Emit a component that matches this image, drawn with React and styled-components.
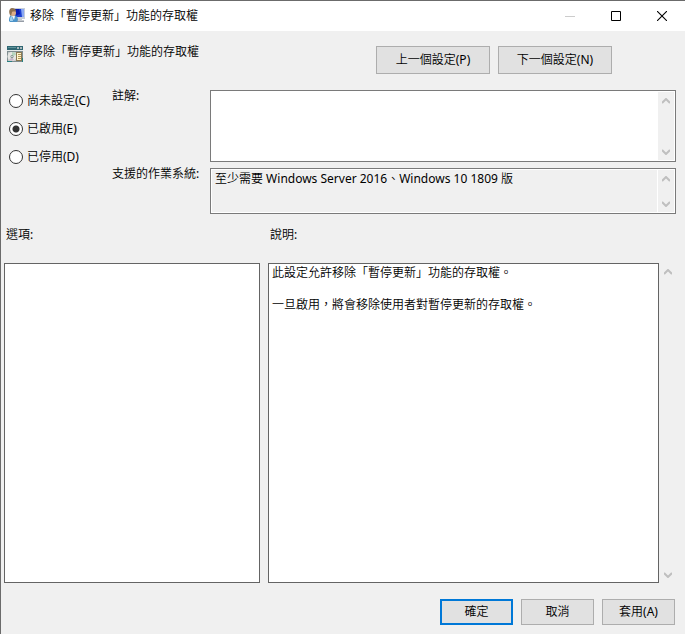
import React from "react";
import styled, { createGlobalStyle, css } from "styled-components";

const GlobalStyle = createGlobalStyle`
  * { box-sizing: border-box; }
  body {
    margin: 0;
    background: #f0f0f0;
    color: #000;
    font: 400 12px/16px "Noto Sans", "Noto Sans CJK TC DemiLight", "Noto Sans CJK TC", sans-serif;
  }
  button, textarea, input { font: inherit; color: inherit; margin: 0; }
`;

const Window = styled.div`
  display: flex;
  flex-direction: column;
  min-height: 100vh;
  border-top: 1px solid #6b6b6b;
  border-left: 1px solid #6b6b6b;
  background: #f0f0f0;
`;

const TitleBar = styled.header`
  display: flex;
  align-items: stretch;
  height: 30px;
  padding-left: 8px;
  background: #fff;
`;

const Caption = styled.h1`
  display: flex;
  flex: 1;
  align-items: center;
  gap: 5px;
  margin: 0;
  font-size: 12px;
  font-weight: inherit;
  white-space: nowrap;
`;

const CaptionButton = styled.button`
  display: grid;
  place-items: center;
  width: 46px;
  padding: 0;
  border: 0;
  background: transparent;
`;

const PolicyHeader = styled.div`
  display: flex;
  align-items: center;
  justify-content: space-between;
  padding: 15px 73px 16px 6px;
`;

const PolicyName = styled.h2`
  display: flex;
  align-self: flex-start;
  align-items: flex-start;
  gap: 8px;
  margin: 0;
  font-size: 12px;
  line-height: 12px;
  font-weight: inherit;
  white-space: nowrap;
`;

const ButtonGroup = styled.div`
  display: flex;
  gap: 8px;
`;

const PushButton = styled.button`
  min-width: ${(p) => (p.$wide ? 114 : 73)}px;
  height: ${(p) => (p.$wide ? 28 : 26)}px;
  padding: 0 8px;
  background: #e1e1e1;
  border: ${(p) => (p.$primary ? "2px solid #0078d7" : "1px solid #adadad")};
`;

const Settings = styled.section`
  display: grid;
  grid-template-columns: 103px 98px 1fr;
  row-gap: 6px;
  padding: 0 9px 0 8px;
`;

const States = styled.div`
  display: flex;
  flex-direction: column;
  grid-row: span 2;
  gap: 8px;
  padding-top: 1px;
`;

const RadioLabel = styled.label`
  display: flex;
  align-items: center;
  gap: 4px;
  height: 20px;
  white-space: nowrap;
`;

const Radio = styled.input`
  appearance: none;
  width: 14px;
  height: 14px;
  border: 1px solid #333;
  border-radius: 50%;
  background: #fff;
  &:checked {
    background: radial-gradient(circle, #333 0 3px, #fff 4px);
  }
`;

const FieldLabel = styled.label`
  line-height: ${(p) => (p.$inset ? 16 : 12)}px;
  padding: ${(p) => (p.$inset ? "0 2px" : "0")};
  white-space: nowrap;
`;

const FieldFrame = styled.div`
  display: flex;
  gap: 1px;
  height: ${(p) => (p.$tall ? 72 : 46)}px;
  padding: 1px;
  border: 1px solid #7a7a7a;
  background: #fff;
`;

const TextBox = styled.textarea`
  flex: 1;
  min-width: 0;
  resize: none;
  outline: none;
  border: 0;
  border-radius: 0;
  padding: 1px 3px;
  overflow: hidden;
  background: ${(p) => (p.readOnly ? "#f0f0f0" : "#fff")};
  ${(p) =>
    p.$framed &&
    css`
      border: 1px solid #646464;
      background: #fff;
    `}
`;

const ScrollTrack = styled.div`
  display: flex;
  flex-direction: column;
  justify-content: space-between;
  width: ${(p) => (p.$outer ? 17 : 16)}px;
  background: #f0f0f0;
`;

const ScrollButton = styled.button`
  display: grid;
  place-items: center;
  height: 17px;
  padding: 0;
  border: 0;
  background: transparent;
`;

const Details = styled.section`
  display: grid;
  flex: 1;
  grid-template-columns: 256px 1fr;
  grid-template-rows: auto 1fr;
  gap: 20px 8px;
  padding: 13px 9px 0 3px;
`;

const OptionsPanel = styled.div`
  min-height: 160px;
  border: 1px solid #646464;
  background: #fff;
`;

const HelpPanel = styled.div`
  display: flex;
  min-height: 160px;
`;

const Footer = styled.footer`
  display: flex;
  justify-content: flex-end;
  gap: 8px;
  padding: 16px 10px 9px;
`;

function UserComputerIcon() {
  return (
    <svg width="16" height="16" viewBox="0 0 16 16" aria-hidden="true">
      <path d="M5 0h11v11H6z" fill="#c6cdd9" />
      <path d="M6 1h9v8H6z" fill="#1c3fd0" />
      <path d="M12 1h3v8h-2z" fill="#8aa8f4" />
      <path d="M6 1h4l1 5-5 2z" fill="#0a1cae" />
      <path d="M9 11h4v1h2v2H8v-2h1z" fill="#c4c9cf" />
      <path d="M8 13h7v1H8z" fill="#959ca6" />
      <path d="M0 13c0-4 1-6 4-6s5 2 5 5l-1 2H1z" fill="#4c93c8" />
      <path d="M1 12c0-3 1-4 2-4l1 5H1z" fill="#a0d0ee" />
      <path d="M3 8h3l-1 4z" fill="#f1f5fa" />
      <ellipse cx="4" cy="5" rx="3" ry="3" fill="#dcae86" />
      <path d="M1 7c-2-4 0-7 2-7 3 0 4 2 4 3C5 4 4 3 3 4L2 8z" fill="#8d7050" />
    </svg>
  );
}

function PolicyIcon() {
  return (
    <svg width="16" height="16" viewBox="0 0 16 16" aria-hidden="true">
      <path d="M0 0h16v16H0z" fill="#7f8d90" />
      <path d="M0 0h16v5H0z" fill="#2f6672" />
      <path d="M1 1h8v1H1z" fill="#5f949b" />
      <path d="M10 1h2v2h-2zM13 1h2v2h-2z" fill="#a9b7bb" />
      <path d="M0 4h16v1H0z" fill="#e5e9e9" />
      <path d="M1 6h14v9H1z" fill="#c4c8c7" />
      <circle cx="5" cy="10.500" r="4.500" fill="#e5e6e3" />
      <path d="M5 10V6a4 4 0 0 1 4 3z" fill="#b4d6bd" />
      <path d="M5 11l-3 3a5 5 0 0 0 5 0z" fill="#c7b6c9" />
      <circle cx="5" cy="10.500" r="1.500" fill="#778882" />
      <circle cx="5" cy="10.500" r=".7" fill="#fff" />
      <path d="M9 6h6v9H9z" fill="#8a7953" />
      <path d="M10 7h4v7h-4z" fill="#fff4cc" />
      <path d="M11 8h3v1h-3zM11 10h3v1h-3zM11 12h3v1h-3z" fill="#b19658" />
      <path d="M0 15h5v1H0zM15 12h1v4h-1z" fill="#278080" />
    </svg>
  );
}

function Chevron({ down }) {
  return (
    <svg width="8" height="6" viewBox="0 0 8 6" aria-hidden="true">
      <path d={down ? "M0 1l4 4 4-4" : "M0 5l4-4 4 4"} fill="none" stroke="#bfbfbf" strokeWidth="2" />
    </svg>
  );
}

function ScrollBar({ outer }) {
  return (
    <ScrollTrack $outer={outer}>
      <ScrollButton type="button" aria-label="向上捲動" disabled><Chevron /></ScrollButton>
      <ScrollButton type="button" aria-label="向下捲動" disabled><Chevron down /></ScrollButton>
    </ScrollTrack>
  );
}

const policyName = "移除「暫停更新」功能的存取權";
const states = [
  ["unset", "尚未設定(C)"],
  ["enabled", "已啟用(E)"],
  ["disabled", "已停用(D)"],
];
const helpText = `此設定允許移除「暫停更新」功能的存取權。

一旦啟用，將會移除使用者對暫停更新的存取權。`;

export default function App() {
  return (
    <Window lang="zh-TW">
      <GlobalStyle />
      <TitleBar>
        <Caption><UserComputerIcon />{policyName}</Caption>
        <CaptionButton type="button" aria-label="最小化" disabled>
          <svg width="10" height="10" shapeRendering="crispEdges"><path d="M0 5h10v1H0z" fill="#ccc" /></svg>
        </CaptionButton>
        <CaptionButton type="button" aria-label="最大化">
          <svg width="10" height="10"><path d="M.5.5h9v9h-9z" fill="none" stroke="#000" /></svg>
        </CaptionButton>
        <CaptionButton type="button" aria-label="關閉">
          <svg width="10" height="10"><path d="M0 0l10 10M10 0L0 10" stroke="#000" strokeWidth="1.100" /></svg>
        </CaptionButton>
      </TitleBar>

      <PolicyHeader>
        <PolicyName><PolicyIcon />{policyName}</PolicyName>
        <ButtonGroup>
          <PushButton type="button" $wide>上一個設定(P)</PushButton>
          <PushButton type="button" $wide>下一個設定(N)</PushButton>
        </ButtonGroup>
      </PolicyHeader>

      <Settings>
        <States role="radiogroup" aria-label={policyName}>
          {states.map(([value, label]) => (
            <RadioLabel key={value}>
              <Radio type="radio" name="state" value={value} defaultChecked={value === "enabled"} />
              {label}
            </RadioLabel>
          ))}
        </States>
        <FieldLabel htmlFor="comment">註解:</FieldLabel>
        <FieldFrame $tall>
          <TextBox id="comment" />
          <ScrollBar />
        </FieldFrame>
        <FieldLabel htmlFor="supported">支援的作業系統:</FieldLabel>
        <FieldFrame>
          <TextBox id="supported" readOnly defaultValue="至少需要 Windows Server 2016、Windows 10 1809 版" />
          <ScrollBar />
        </FieldFrame>
      </Settings>

      <Details>
        <FieldLabel as="span" id="options-label" $inset>選項:</FieldLabel>
        <FieldLabel htmlFor="help" $inset>說明:</FieldLabel>
        <OptionsPanel role="region" aria-labelledby="options-label" />
        <HelpPanel>
          <TextBox id="help" $framed readOnly defaultValue={helpText} />
          <ScrollBar outer />
        </HelpPanel>
      </Details>

      <Footer>
        <PushButton type="submit" $primary>確定</PushButton>
        <PushButton type="button">取消</PushButton>
        <PushButton type="button">套用(A)</PushButton>
      </Footer>
    </Window>
  );
}
